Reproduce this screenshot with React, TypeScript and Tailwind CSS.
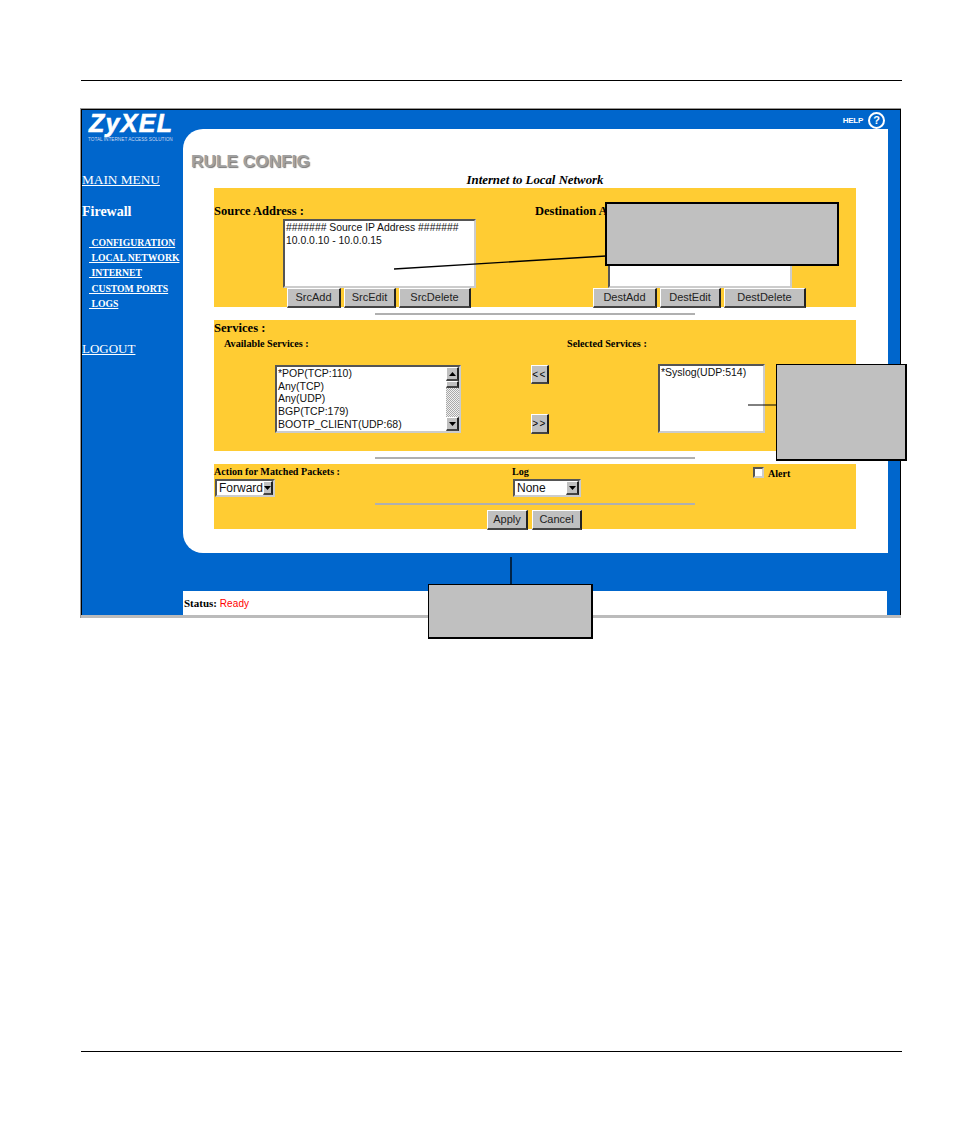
const bevel = "border-t border-l border-t-white border-l-white border-r-2 border-b-2 border-r-[#222] border-b-[#444] bg-[#c0c0c0]";
const inset = "border-2 border-t-[#555] border-l-[#555] border-r-[#ccc] border-b-[#ccc] bg-white";

const PushButton = ({ label, width }: { label: string; width: string }) => (
  <div className={`${bevel} ${width} h-[20px] flex items-center justify-center text-[11px] text-[#222]`}>{label}</div>
);

const Arrow = ({ up }: { up?: boolean }) => (
  <svg width="7" height="4" viewBox="0 0 7 4">
    <polygon points={up ? "3.5,0 7,4 0,4" : "0,0 7,0 3.5,4"} fill="#000" />
  </svg>
);

const Select = ({ value, width }: { value: string; width: string }) => (
  <div className={`${inset} ${width} h-[18px] flex items-center justify-between`}>
    <span className="pl-[2px] text-[12px] text-[#111] leading-none">{value}</span>
    <span className={`${bevel} w-[13px] h-[14px] flex items-center justify-center`}>
      <Arrow />
    </span>
  </div>
);

const Rule = () => <div className="ml-[161px] w-[320px] h-[2px] bg-[#b0b0b0]" />;

const SideLink = ({ label }: { label: string }) => (
  <div className="h-[15.2px] pl-[7px] text-[9.7px] leading-[15px] font-bold text-white underline whitespace-pre">{" " + label}</div>
);

export default function App() {
  return (
    <div className="relative w-[954px] h-[1132px] bg-white overflow-hidden font-['Liberation_Sans',sans-serif]">
      <div className="pt-[80px] pl-[81px]">
        <div className="w-[821px] h-[1px] bg-black" />
      </div>

      {/* captured screen */}
      <div className="ml-[80px] mt-[27px] w-[821px] h-[510px] border-t border-l border-[#999]">
        <div className="h-full border-t-[1px] border-l-[1px] border-r-[1px] border-black bg-[#0066cc] flex flex-col">
          <div className="flex flex-1 min-h-0">
            {/* sidebar */}
            <div className="w-[101px] shrink-0 font-['Liberation_Serif',serif] text-white">
              <div className="pl-[7px] pt-[1px] font-['Liberation_Sans',sans-serif] italic font-black text-[25px] leading-[25px] tracking-[1.3px] [-webkit-text-stroke:0.6px_white]">ZyXEL</div>
              <div className="pl-[6px] pt-[1px] text-[4.7px] leading-[6px] whitespace-nowrap font-['Liberation_Sans',sans-serif] text-[#c8d8f0]">TOTAL INTERNET ACCESS SOLUTION</div>
              <div className="pt-[29px] text-[13.3px] leading-[16px] underline whitespace-nowrap">MAIN MENU</div>
              <div className="pt-[16px] text-[14px] leading-[16px] font-bold">Firewall</div>
              <div className="pt-[15px] whitespace-nowrap">
                <SideLink label="CONFIGURATION" />
                <SideLink label="LOCAL NETWORK" />
                <SideLink label="INTERNET" />
                <SideLink label="CUSTOM PORTS" />
                <SideLink label="LOGS" />
              </div>
              <div className="pt-[30px] text-[13px] leading-[16px] underline">LOGOUT</div>
            </div>

            {/* main column */}
            <div className="flex-1 flex flex-col min-w-0">
              <div className="h-[19px] shrink-0 flex justify-end items-start pr-[15px] pt-[2px] gap-[5px]">
                <span className="mt-[4px] text-[8px] leading-[10px] font-bold tracking-[-0.3px] text-white">HELP</span>
                <span className="w-[17px] h-[17px] rounded-full border-2 border-white flex items-center justify-center text-[11px] leading-none font-bold text-white">?</span>
              </div>

              <div className="h-[424px] shrink-0 mr-[12px] bg-white rounded-l-[20px] pt-[22px] font-['Liberation_Serif',serif]">
                <div className="pl-[8px] h-[22px] font-['Liberation_Sans',sans-serif] font-bold text-[17.3px] leading-[20px] text-[#a0a0a0] [text-shadow:1px_1px_1px_#777]">RULE CONFIG</div>
                <div className="pl-[31px] w-[673px]">
                  <div className="h-[15px] text-center text-[12.8px] leading-[15px] font-bold italic text-black whitespace-nowrap">Internet to Local Network</div>

                  {/* addresses */}
                  <div className="w-[642px] h-[119px] bg-[#ffcc33] grid grid-cols-2">
                    <div className="pt-[16px]">
                      <div className="text-[12.5px] leading-[15px] font-bold">Source Address :</div>
                      <div className={`${inset} ml-[69px] w-[193px] h-[69px] px-[1px] font-['Liberation_Sans',sans-serif] text-[10.4px] leading-[13px] text-[#111]`}>
                        <div>####### Source IP Address #######</div>
                        <div>10.0.0.10 - 10.0.0.15</div>
                      </div>
                      <div className="ml-[73px] flex gap-[3px] font-['Liberation_Sans',sans-serif]">
                        <PushButton label="SrcAdd" width="w-[54px]" />
                        <PushButton label="SrcEdit" width="w-[52px]" />
                        <PushButton label="SrcDelete" width="w-[72px]" />
                      </div>
                    </div>
                    <div className="pt-[16px]">
                      <div className="text-[12.5px] leading-[15px] font-bold whitespace-nowrap">Destination Address :</div>
                      <div className={`${inset} ml-[73px] w-[184px] h-[69px]`} />
                      <div className="ml-[58px] flex gap-[3px] font-['Liberation_Sans',sans-serif]">
                        <PushButton label="DestAdd" width="w-[64px]" />
                        <PushButton label="DestEdit" width="w-[61px]" />
                        <PushButton label="DestDelete" width="w-[82px]" />
                      </div>
                    </div>
                  </div>

                  <div className="h-[13px] flex items-center w-[642px]"><Rule /></div>

                  {/* services */}
                  <div className="w-[642px] h-[131px] bg-[#ffcc33] pt-[1px] font-bold">
                    <div className="text-[12.6px] leading-[15px]">Services :</div>
                    <div className="flex h-[15px] text-[10.2px] leading-[15px]">
                      <span className="pl-[10px] w-[353px]">Available Services :</span>
                      <span>Selected Services :</span>
                    </div>
                    <div className="flex mt-[13px] font-normal font-['Liberation_Sans',sans-serif]">
                      <div className={`${inset} ml-[61px] mt-[1px] w-[186px] h-[68px] flex`}>
                        <div className="flex-1 pl-[1px] text-[10.5px] leading-[12.7px] text-[#111] overflow-hidden whitespace-nowrap">
                          <div>*POP(TCP:110)</div>
                          <div>Any(TCP)</div>
                          <div>Any(UDP)</div>
                          <div>BGP(TCP:179)</div>
                          <div>BOOTP_CLIENT(UDP:68)</div>
                        </div>
                        <div className="w-[13px] flex flex-col bg-[#d8d8d8] bg-[repeating-conic-gradient(#a8a8a8_0_25%,#f0f0f0_0_50%)] bg-[length:2px_2px]">
                          <div className={`${bevel} h-[14px] flex items-center justify-center`}><Arrow up /></div>
                          <div className={`${bevel} h-[7px]`} />
                          <div className="flex-1" />
                          <div className={`${bevel} h-[14px] flex items-center justify-center`}><Arrow /></div>
                        </div>
                      </div>
                      <div className="ml-[70px] mt-[1px] w-[18px] h-[69px] flex flex-col justify-between text-[10px] tracking-[1.5px]">
                        <div className={`${bevel} h-[19px] flex items-center justify-center`}>&lt;&lt;</div>
                        <div className={`${bevel} h-[20px] flex items-center justify-center`}>&gt;&gt;</div>
                      </div>
                      <div className={`${inset} ml-[109px] w-[107px] h-[69px] pl-[1px] text-[10.5px] leading-[13px] text-[#111]`}>*Syslog(UDP:514)</div>
                    </div>
                  </div>

                  <div className="h-[13px] flex items-center w-[642px]"><Rule /></div>

                  {/* action / log */}
                  <div className="w-[642px] h-[65px] bg-[#ffcc33]">
                    <div className="flex h-[39px] pt-[1px]">
                      <div className="w-[298px]">
                        <div className="text-[10.1px] leading-[14px] font-bold whitespace-nowrap">Action for Matched Packets :</div>
                        <div className="ml-[1px] font-['Liberation_Sans',sans-serif]"><Select value="Forward" width="w-[60px]" /></div>
                      </div>
                      <div className="w-[241px]">
                        <div className="text-[10.1px] leading-[14px] font-bold">Log</div>
                        <div className="ml-[1px] font-['Liberation_Sans',sans-serif]"><Select value="None" width="w-[68px]" /></div>
                      </div>
                      <div className="flex items-start gap-[4px] pt-[2px]">
                        <span className={`${inset} w-[11px] h-[11px]`} />
                        <span className="text-[10px] leading-[14px] font-bold">Alert</span>
                      </div>
                    </div>
                    <Rule />
                    <div className="flex ml-[273px] mt-[5px] gap-[4px] font-['Liberation_Sans',sans-serif]">
                      <PushButton label="Apply" width="w-[41px]" />
                      <PushButton label="Cancel" width="w-[50px]" />
                    </div>
                  </div>
                </div>
              </div>

              <div className="h-[38px] shrink-0" />
              <div className="flex-1 mr-[13px] bg-white pl-[1px] pt-[4px] font-['Liberation_Serif',serif] text-[11px] leading-[16px]">
                <span className="font-bold">Status:</span> <span className="font-['Liberation_Sans',sans-serif] text-[10px] tracking-[0.1px] text-[#f00]">Ready</span>
              </div>
            </div>
          </div>
          <div className="h-[3px] shrink-0 bg-[#bbb] -mx-[1px]" />
        </div>
      </div>

      <div className="pl-[81px] pt-[433px]">
        <div className="w-[821px] h-[1px] bg-black" />
      </div>

      {/* annotation callouts */}
      <svg className="absolute left-0 top-0" width="954" height="1132">
        <line x1="394" y1="269" x2="606" y2="256" stroke="#000" strokeWidth="1.3" />
        <line x1="748" y1="405" x2="777" y2="405" stroke="#000" strokeWidth="1" />
        <line x1="511" y1="557" x2="511" y2="585" stroke="#000" strokeWidth="1.3" />
      </svg>
      <div className="absolute left-[605px] top-[202px] w-[234px] h-[64px] bg-[#c0c0c0] border-2 border-black" />
      <div className="absolute left-[776px] top-[364px] w-[131px] h-[97px] bg-[#c0c0c0] border border-black border-r-2 border-b-2" />
      <div className="absolute left-[428px] top-[584px] w-[165px] h-[55px] bg-[#c0c0c0] border border-black border-r-2 border-b-2" />
    </div>
  );
}
